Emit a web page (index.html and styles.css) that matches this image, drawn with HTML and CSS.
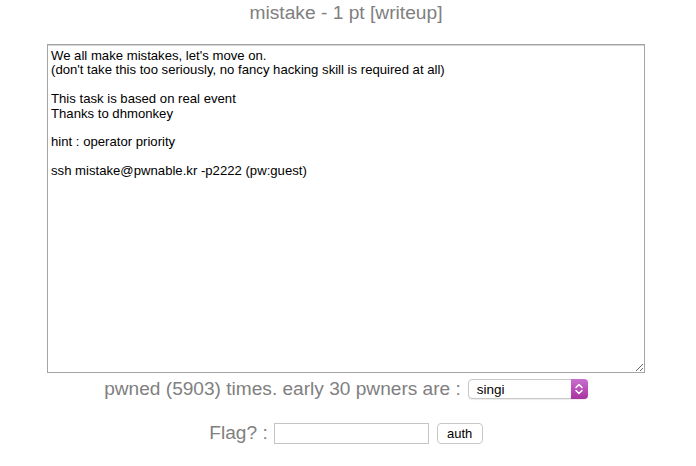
FILE: index.html
```html
<!DOCTYPE html>
<html>
<head>
<meta charset="utf-8">
<link rel="stylesheet" href="styles.css">
</head>
<body>
<div class="page">
  <h1 class="title">mistake - 1 pt [writeup]</h1>
  <textarea class="desc" readonly>We all make mistakes, let's move on.
(don't take this too seriously, no fancy hacking skill is required at all)

This task is based on real event
Thanks to dhmonkey

hint : operator priority

ssh mistake@pwnable.kr -p2222 (pw:guest)</textarea>
  <div class="row pwned">
    <span class="label">pwned (5903) times. early 30 pwners are :</span>
    <span class="select-wrap">
      <select class="pwners"><option>singi</option></select>
      <span class="arrow"><svg width="14" height="16" viewBox="0 0 14 16"><path d="M4 6.5 L7 3.5 L10 6.5 M4 9.5 L7 12.5 L10 9.5" fill="none" stroke="#fff" stroke-width="1.5" stroke-linecap="round" stroke-linejoin="round"/></svg></span>
    </span>
  </div>
  <div class="row flag">
    <span class="label">Flag? :</span>
    <input class="flag-input" type="text">
    <button class="auth">auth</button>
  </div>
</div>
</body>
</html>
```
FILE: styles.css
```css
html, body {
  margin: 0;
  padding: 0;
  background: #fff;
}
.page {
  width: 692px;
  display: flex;
  flex-direction: column;
  align-items: center;
  font-family: "Liberation Sans", Arial, sans-serif;
}
.title {
  margin: 0;
  padding-top: 1px;
  height: 43px;
  font-size: 19.2px;
  font-weight: normal;
  color: #808080;
  line-height: 24px;
}
.desc {
  box-sizing: border-box;
  width: 598px;
  height: 329px;
  margin: 0;
  border: 1px solid #a5a5a5;
  box-shadow: inset 0 1px 0 #d4d4d4;
  padding: 4px 3px 3px 3px;
  font-family: "Liberation Sans", Arial, sans-serif;
  font-size: 13.15px;
  line-height: 14.4px;
  color: #000;
  resize: both;
  outline: none;
}
.row {
  display: flex;
  align-items: center;
}
.label {
  color: #808080;
  font-size: 19.1px;
}
.pwned {
  margin-top: 4px;
  height: 24px;
}
.pwned .label {
  margin-right: 7px;
}
.select-wrap {
  position: relative;
  display: inline-block;
  width: 120px;
  height: 20px;
}
.pwners {
  appearance: none;
  -webkit-appearance: none;
  box-sizing: border-box;
  width: 120px;
  height: 20px;
  border: 1px solid #c8c8c8;
  border-radius: 4px;
  background: #fff;
  padding: 0 0 0 8px;
  font-family: "Liberation Sans", Arial, sans-serif;
  font-size: 13.5px;
  color: #000;
  box-shadow: 0 1px 1px rgba(0,0,0,0.08);
}
.arrow {
  position: absolute;
  right: 0;
  top: 0;
  width: 17px;
  height: 20px;
  border-radius: 0 4px 4px 0;
  background: linear-gradient(#c86fd0, #a8329f);
  display: flex;
  align-items: center;
  justify-content: center;
}
.flag {
  margin-top: 20px;
  height: 24px;
}
.flag .label {
  margin-right: 6px;
}
.flag-input {
  box-sizing: border-box;
  width: 155px;
  height: 21px;
  border: 1px solid #c4c4c4;
  padding: 1px 3px;
  margin: 0 8px 0 0;
  outline: none;
}
.auth {
  box-sizing: border-box;
  height: 21px;
  width: 46px;
  border: 1px solid #c8c8c8;
  border-radius: 4px;
  background: #fff;
  font-family: "Liberation Sans", Arial, sans-serif;
  font-size: 13px;
  color: #000;
  padding: 0;
}
```
